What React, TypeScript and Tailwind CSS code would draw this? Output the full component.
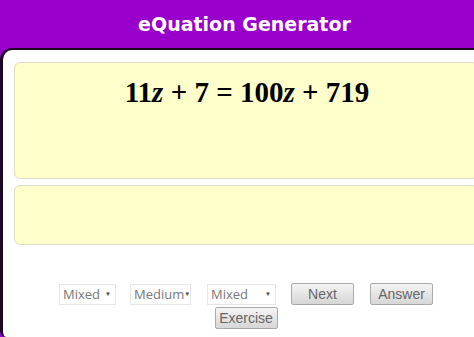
export default function App() {
  return (
    <div className="w-[474px] h-[337px] overflow-hidden bg-[#9900cc]">
      <div className="w-[489px] h-full flex flex-col">
        {/* Title bar */}
        <header className="h-[48px] flex items-center justify-center">
          <h1 className="text-white font-bold text-[19px] font-['Comic_Sans_MS','DejaVu_Sans',sans-serif]">
            eQuation Generator
          </h1>
        </header>

        {/* Main panel */}
        <main className="flex-1 bg-white border-l-[3px] border-t-[2px] border-[#1c0822] rounded-tl-[12px] rounded-bl-[6px] px-[11px] pt-[12px]">
          <div className="h-[117px] bg-[#ffffcc] border border-[#dddcc8] rounded-[6px] pt-[12px] text-center">
            <p className="font-['Liberation_Serif',serif] font-bold text-[29px] leading-[34px] text-black pl-[2px]">
              11<i>z</i> + 7 = 100<i>z</i> + 719
            </p>
          </div>
          <div className="mt-[6px] h-[60px] bg-[#ffffcc] border border-[#dddcc8] rounded-[6px]" />

          {/* Controls */}
          <div className="mt-[38px] flex flex-col items-center gap-[2px] font-['Open_Sans',sans-serif] text-[13px] text-[#777]">
            <div className="flex items-center">
              <Select label="Mixed" width="w-[57px]" />
              <div className="w-[14px]" />
              <Select label="Medium" width="w-[61px]" />
              <div className="w-[16px]" />
              <Select label="Mixed" width="w-[69px]" />
              <div className="w-[15px]" />
              <Button label="Next" />
              <div className="w-[16px]" />
              <Button label="Answer" />
            </div>
            <Button label="Exercise" />
          </div>
        </main>
      </div>
    </div>
  );
}

function Select({ label, width }: { label: string; width: string }) {
  return (
    <div
      className={`${width} h-[21px] bg-white border border-[#e6e6e6] flex items-center justify-between pl-[3px] pr-[4px]`}
    >
      <span className="leading-none">{label}</span>
      <span className="text-[6px] text-[#444] leading-none">▼</span>
    </div>
  );
}

function Button({ label }: { label: string }) {
  return (
    <button className="w-[63px] h-[22px] rounded-[2px] border border-[#aaa] bg-gradient-to-b from-[#f4f4f4] to-[#d6d6d6] text-[#666] text-[14px] leading-none font-['Liberation_Sans',sans-serif]">
      {label}
    </button>
  );
}
